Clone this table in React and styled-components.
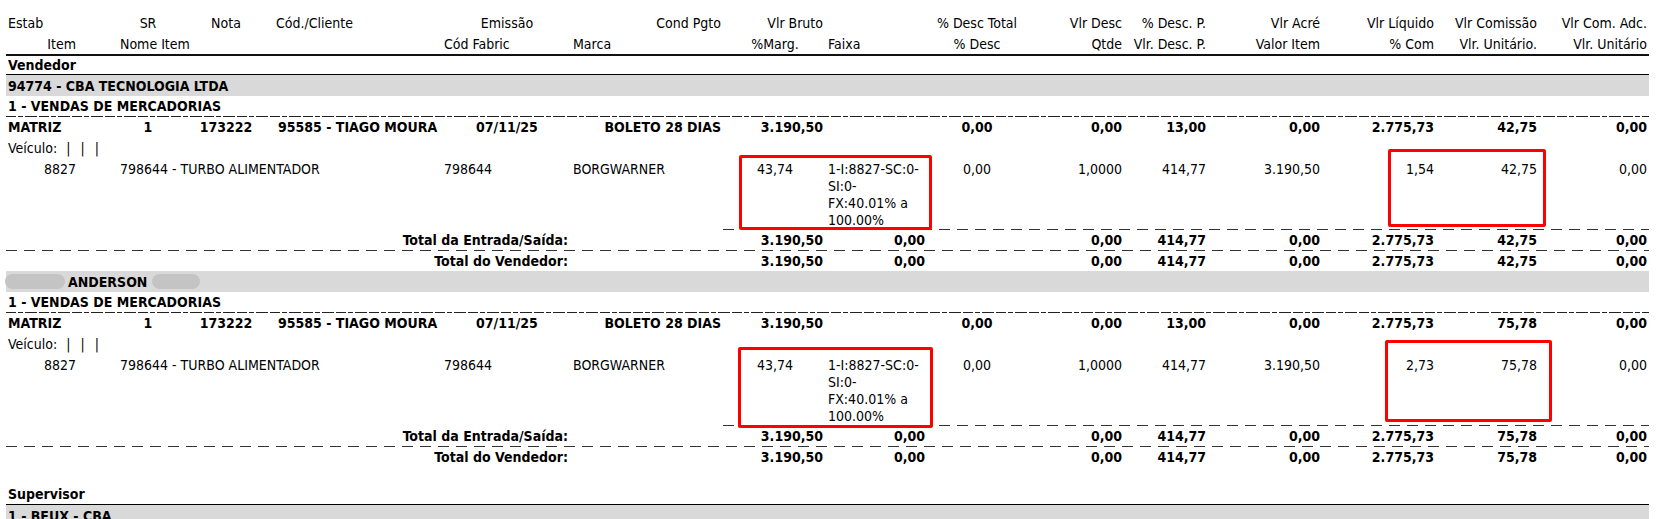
import React from 'react';
import styled, { createGlobalStyle } from 'styled-components';

const GlobalStyle = createGlobalStyle`
  body {
    margin: 0;
    background: #fff;
    color: #000;
    font-family: "DejaVu Sans Condensed", "DejaVu Sans", sans-serif;
    font-size: 14px;
  }
`;

// column tracks of the report, left to right
const COLS = {
  invoice: '114px 56px 100px 184px 94px 167px 102px 102px 104px 93px 84px 114px 114px 103px 112px',
  item: '114px 324px 129px 152px 100px 100px 104px 93px 84px 114px 114px 103px 112px',
  total: '562px 153px 102px 102px 104px 93px 84px 114px 114px 103px 112px',
};

const Page = styled.div`
  width: 1643px;
  padding: 13px 0 0 6px;
`;

const Row = styled.div`
  display: grid;
  grid-template-columns: ${(p) => COLS[p.$cols]};
  height: ${(p) => p.$h || 21}px;
  line-height: ${(p) => p.$h || 21}px;
  font-weight: ${(p) => (p.$bold ? 700 : 400)};
  white-space: nowrap;
`;

const ItemRow = styled(Row)`
  position: relative;
  height: 70px;
  line-height: 17px;
  padding-top: 2px;
  box-sizing: border-box;
`;

const Cell = styled.div`
  text-align: ${(p) => p.$a || 'left'};
  padding-left: ${(p) => p.$pl || 0}px;
  padding-right: ${(p) => p.$pr || 0}px;
`;

const HeaderRule = styled.div`
  height: 2px;
  background: #111;
`;

const SectionLabel = styled.div`
  height: ${(p) => p.$h}px;
  line-height: ${(p) => p.$h}px;
  padding-left: 2px;
  font-weight: 700;
  border-bottom: 1px solid #000;
  margin-top: ${(p) => p.$mt || 0}px;
`;

const Band = styled.div`
  display: flex;
  align-items: center;
  gap: 3px;
  height: 21px;
  padding-left: 2px;
  background: #d9d9d9;
  font-weight: 700;
  white-space: nowrap;
`;

const Blur = styled.span`
  display: inline-block;
  width: ${(p) => p.$w}px;
  height: 15px;
  margin-left: ${(p) => p.$ml || 0}px;
  border-radius: 8px;
  background: #c4c4c4;
  filter: blur(0.6px);
`;

const SubLabel = styled.div`
  height: 20px;
  line-height: 20px;
  padding-left: 2px;
  font-weight: 700;
`;

const DenseDash = styled.div`
  height: 1px;
  background: repeating-linear-gradient(
    90deg,
    #222 0 10px,
    transparent 10px 12px,
    #222 12px 17px,
    transparent 17px 19px,
    #222 19px 31px,
    transparent 31px 33px
  );
`;

const LongDash = styled.div`
  height: 1px;
  margin-left: ${(p) => p.$from || 0}px;
  background: repeating-linear-gradient(90deg, #333 0 11px, transparent 11px 18px);
`;

const Vehicle = styled.div`
  display: flex;
  gap: 10px;
  height: 21px;
  line-height: 21px;
  padding-left: 2px;
`;

const Pipe = styled.span`
  margin-left: ${(p) => p.$ml || 0}px;
`;

const Mark = styled.div`
  position: absolute;
  left: ${(p) => p.$x}px;
  top: ${(p) => p.$y}px;
  width: ${(p) => p.$w}px;
  height: ${(p) => p.$h}px;
  border: 3px solid #f00;
  border-radius: 2px;
  box-sizing: border-box;
  pointer-events: none;
`;

const head1 = [
  ['Estab', 'left', 2], ['SR', 'center'], ['Nota', 'center'], ['Cód./Cliente', 'left', 0],
  ['Emissão', 'center'], ['Cond Pgto', 'right'], ['Vlr Bruto', 'right'], ['', 'right'],
  ['% Desc Total', 'center'], ['Vlr Desc', 'right'], ['% Desc. P.', 'right'], ['Vlr Acré', 'right'],
  ['Vlr Líquido', 'right'], ['Vlr Comissão', 'right'], ['Vlr Com. Adc.', 'right', 0, 2],
];

const head2 = [
  ['Item', 'right', 0, 44], ['Nome Item', 'left'], ['Cód Fabric', 'left'], ['Marca', 'left'],
  ['%Marg.', 'center'], ['Faixa', 'left', 3], ['% Desc', 'center'], ['Qtde', 'right'],
  ['Vlr. Desc. P.', 'right'], ['Valor Item', 'right'], ['% Com', 'right'],
  ['Vlr. Unitário.', 'right'], ['Vlr. Unitário', 'right', 0, 2],
];

const vendors = [
  {
    name: '94774 - CBA TECNOLOGIA LTDA',
    pct: '1,54',
    com: '42,75',
    marks: [
      { x: 733, y: -4, w: 193, h: 75 },
      { x: 1382, y: -10, w: 158, h: 78 },
    ],
  },
  {
    name: 'ANDERSON',
    hidden: true,
    pct: '2,73',
    com: '75,78',
    marks: [
      { x: 732, y: -8, w: 195, h: 81 },
      { x: 1379, y: -15, w: 167, h: 82 },
    ],
  },
];

const renderCells = (cells) =>
  cells.map(([text, a, pl, pr], i) => (
    <Cell key={i} $a={a} $pl={pl} $pr={pr}>
      {text}
    </Cell>
  ));

const Totals = ({ label, com }) => (
  <Row $cols="total" $h={20} $bold>
    {renderCells([
      [label, 'right'], ['', 'left'], ['3.190,50', 'right'], ['0,00', 'right'], ['', 'center'],
      ['0,00', 'right'], ['414,77', 'right'], ['0,00', 'right'], ['2.775,73', 'right'],
      [com, 'right'], ['0,00', 'right', 0, 2],
    ])}
  </Row>
);

const VendorBlock = ({ v }) => (
  <>
    <Band>
      {v.hidden ? (
        <>
          <Blur $w={60} $ml={-3} />
          <span>{v.name}</span>
          <Blur $w={48} $ml={2} />
        </>
      ) : (
        <span>{v.name}</span>
      )}
    </Band>
    <SubLabel>1 - VENDAS DE MERCADORIAS</SubLabel>
    <DenseDash />
    <Row $cols="invoice" $bold>
      {renderCells([
        ['MATRIZ', 'left', 2], ['1', 'center'], ['173222', 'center'], ['95585 - TIAGO MOURA', 'left', 2],
        ['07/11/25', 'center'], ['BOLETO 28 DIAS', 'right'], ['3.190,50', 'right'], ['', 'right'],
        ['0,00', 'center'], ['0,00', 'right'], ['13,00', 'right'], ['0,00', 'right'],
        ['2.775,73', 'right'], [v.com, 'right'], ['0,00', 'right', 0, 2],
      ])}
    </Row>
    <Vehicle>
      <span>Veículo:</span>
      <Pipe $ml={-1}>|</Pipe>
      <Pipe>|</Pipe>
      <Pipe>|</Pipe>
    </Vehicle>
    <ItemRow $cols="item">
      {renderCells([
        ['8827', 'right', 0, 44], ['798644 - TURBO ALIMENTADOR', 'left'], ['798644', 'left'],
        ['BORGWARNER', 'left'], ['43,74', 'center'],
      ])}
      <Cell $pl={3}>
        1-I:8827-SC:0-
        <br />
        SI:0-
        <br />
        FX:40.01% a
        <br />
        100.00%
      </Cell>
      {renderCells([
        ['0,00', 'center'], ['1,0000', 'right'], ['414,77', 'right'], ['3.190,50', 'right'],
        [v.pct, 'right'], [v.com, 'right'], ['0,00', 'right', 0, 2],
      ])}
      {v.marks.map((m, i) => (
        <Mark key={i} $x={m.x} $y={m.y} $w={m.w} $h={m.h} />
      ))}
    </ItemRow>
    <LongDash $from={717} />
    <Totals label="Total da Entrada/Saída:" com={v.com} />
    <LongDash />
    <Totals label="Total do Vendedor:" com={v.com} />
  </>
);

export default function App() {
  return (
    <>
      <GlobalStyle />
      <Page>
        <Row $cols="invoice">{renderCells(head1)}</Row>
        <Row $cols="item" $h={20}>{renderCells(head2)}</Row>
        <HeaderRule />
        <SectionLabel $h={18}>Vendedor</SectionLabel>
        {vendors.map((v) => (
          <VendorBlock key={v.name} v={v} />
        ))}
        <SectionLabel $h={19} $mt={18}>Supervisor</SectionLabel>
        <Band>
          <span>1 - BEUX - CBA</span>
        </Band>
      </Page>
    </>
  );
}
